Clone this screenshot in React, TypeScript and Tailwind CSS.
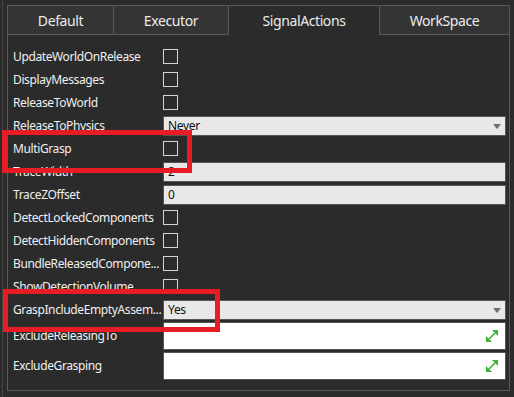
import React from "react";

type Row =
  | { label: string; kind: "check" }
  | { label: string; kind: "select"; value: string }
  | { label: string; kind: "text"; value: string }
  | { label: string; kind: "collection" };

const rows: Row[] = [
  { label: "UpdateWorldOnRelease", kind: "check" },
  { label: "DisplayMessages", kind: "check" },
  { label: "ReleaseToWorld", kind: "check" },
  { label: "ReleaseToPhysics", kind: "select", value: "Never" },
  { label: "MultiGrasp", kind: "check" },
  { label: "TraceWidth", kind: "text", value: "2" },
  { label: "TraceZOffset", kind: "text", value: "0" },
  { label: "DetectLockedComponents", kind: "check" },
  { label: "DetectHiddenComponents", kind: "check" },
  { label: "BundleReleasedCompone...", kind: "check" },
  { label: "ShowDetectionVolume", kind: "check" },
  { label: "GraspIncludeEmptyAssem...", kind: "select", value: "Yes" },
  { label: "ExcludeReleasingTo", kind: "collection" },
  { label: "ExcludeGrasping", kind: "collection" },
];

const tabs = [
  { name: "Default", width: "w-[106px]" },
  { name: "Executor", width: "w-[115px]" },
  { name: "SignalActions", width: "w-[151px]", active: true },
  { name: "WorkSpace", width: "w-[131px]" },
];

function ExpandIcon() {
  return (
    <svg width="12" height="12" viewBox="0 0 12 12">
      <line x1="3" y1="9" x2="9" y2="3" stroke="#3cb432" strokeWidth="1.6" />
      <polygon points="12,0 12,6 6,0" fill="#3cb432" />
      <polygon points="0,12 0,6 6,12" fill="#3cb432" />
    </svg>
  );
}

function Arrow() {
  return (
    <svg width="8" height="5" viewBox="0 0 8 5" className="absolute right-[4px] top-[7px]">
      <polygon points="0,0 8,0 4,5" fill="#6e6e6e" />
    </svg>
  );
}

function Value({ row }: { row: Row }) {
  if (row.kind === "check") {
    return <div className="w-[15px] h-[15px] border border-[#d4d4d4]" />;
  }
  if (row.kind === "collection") {
    return (
      <div className="relative h-[28px] w-full bg-white border border-[#555555] flex items-center justify-end pr-[7px]">
        <ExpandIcon />
      </div>
    );
  }
  return (
    <div className="relative h-[20px] w-full bg-[#e8e8e8] border border-[#555555] flex items-center pl-[4px] text-[12px] tracking-[-0.3px] text-[#111]">
      {row.value}
      {row.kind === "select" && <Arrow />}
    </div>
  );
}

export default function App() {
  return (
    <div
      className="relative w-[514px] h-[397px] bg-[#2b2b2b] overflow-hidden pl-[2px]"
      style={{ fontFamily: '"Noto Sans", "Open Sans", sans-serif' }}
    >
      <div className="h-full border-l border-[#474747] pl-[4px] pt-[5px]">
        {/* tabs */}
        <div className="flex h-[30px]">
          {tabs.map((t) => (
            <div
              key={t.name}
              className={`${t.width} flex items-center justify-center border-t border-l border-[#5a5a5a] text-[14px] tracking-[-0.4px] text-[#ececec] ${
                t.active ? "bg-[#2b2b2b] border-b border-b-transparent" : "bg-[#343434] border-b"
              } ${t.name === "WorkSpace" ? "border-r" : ""}`}
            >
              {t.name}
            </div>
          ))}
        </div>
        {/* panel */}
        <div className="w-[503px] h-[356px] border-l border-r border-b border-[#5a5a5a] pt-[10px] pl-[5px] pr-[3px]">
          {rows.map((row) => (
            <div
              key={row.label}
              className={`flex items-center ${row.kind === "collection" ? "h-[30px]" : "h-[23px]"}`}
            >
              <div className="w-[150px] shrink-0 text-[12px] tracking-[-0.38px] text-[#f0f0f0] whitespace-nowrap">
                {row.label}
              </div>
              <div className="flex-1 flex items-center">
                <Value row={row} />
              </div>
            </div>
          ))}
        </div>
      </div>

      {/* annotation boxes */}
      <div className="absolute left-[2px] top-[130px] w-[190px] h-[43px] border-[5px] border-[#e81c24]" />
      <div className="absolute left-[3px] top-[289px] w-[217px] h-[43px] border-[5px] border-[#e81c24]" />
    </div>
  );
}
